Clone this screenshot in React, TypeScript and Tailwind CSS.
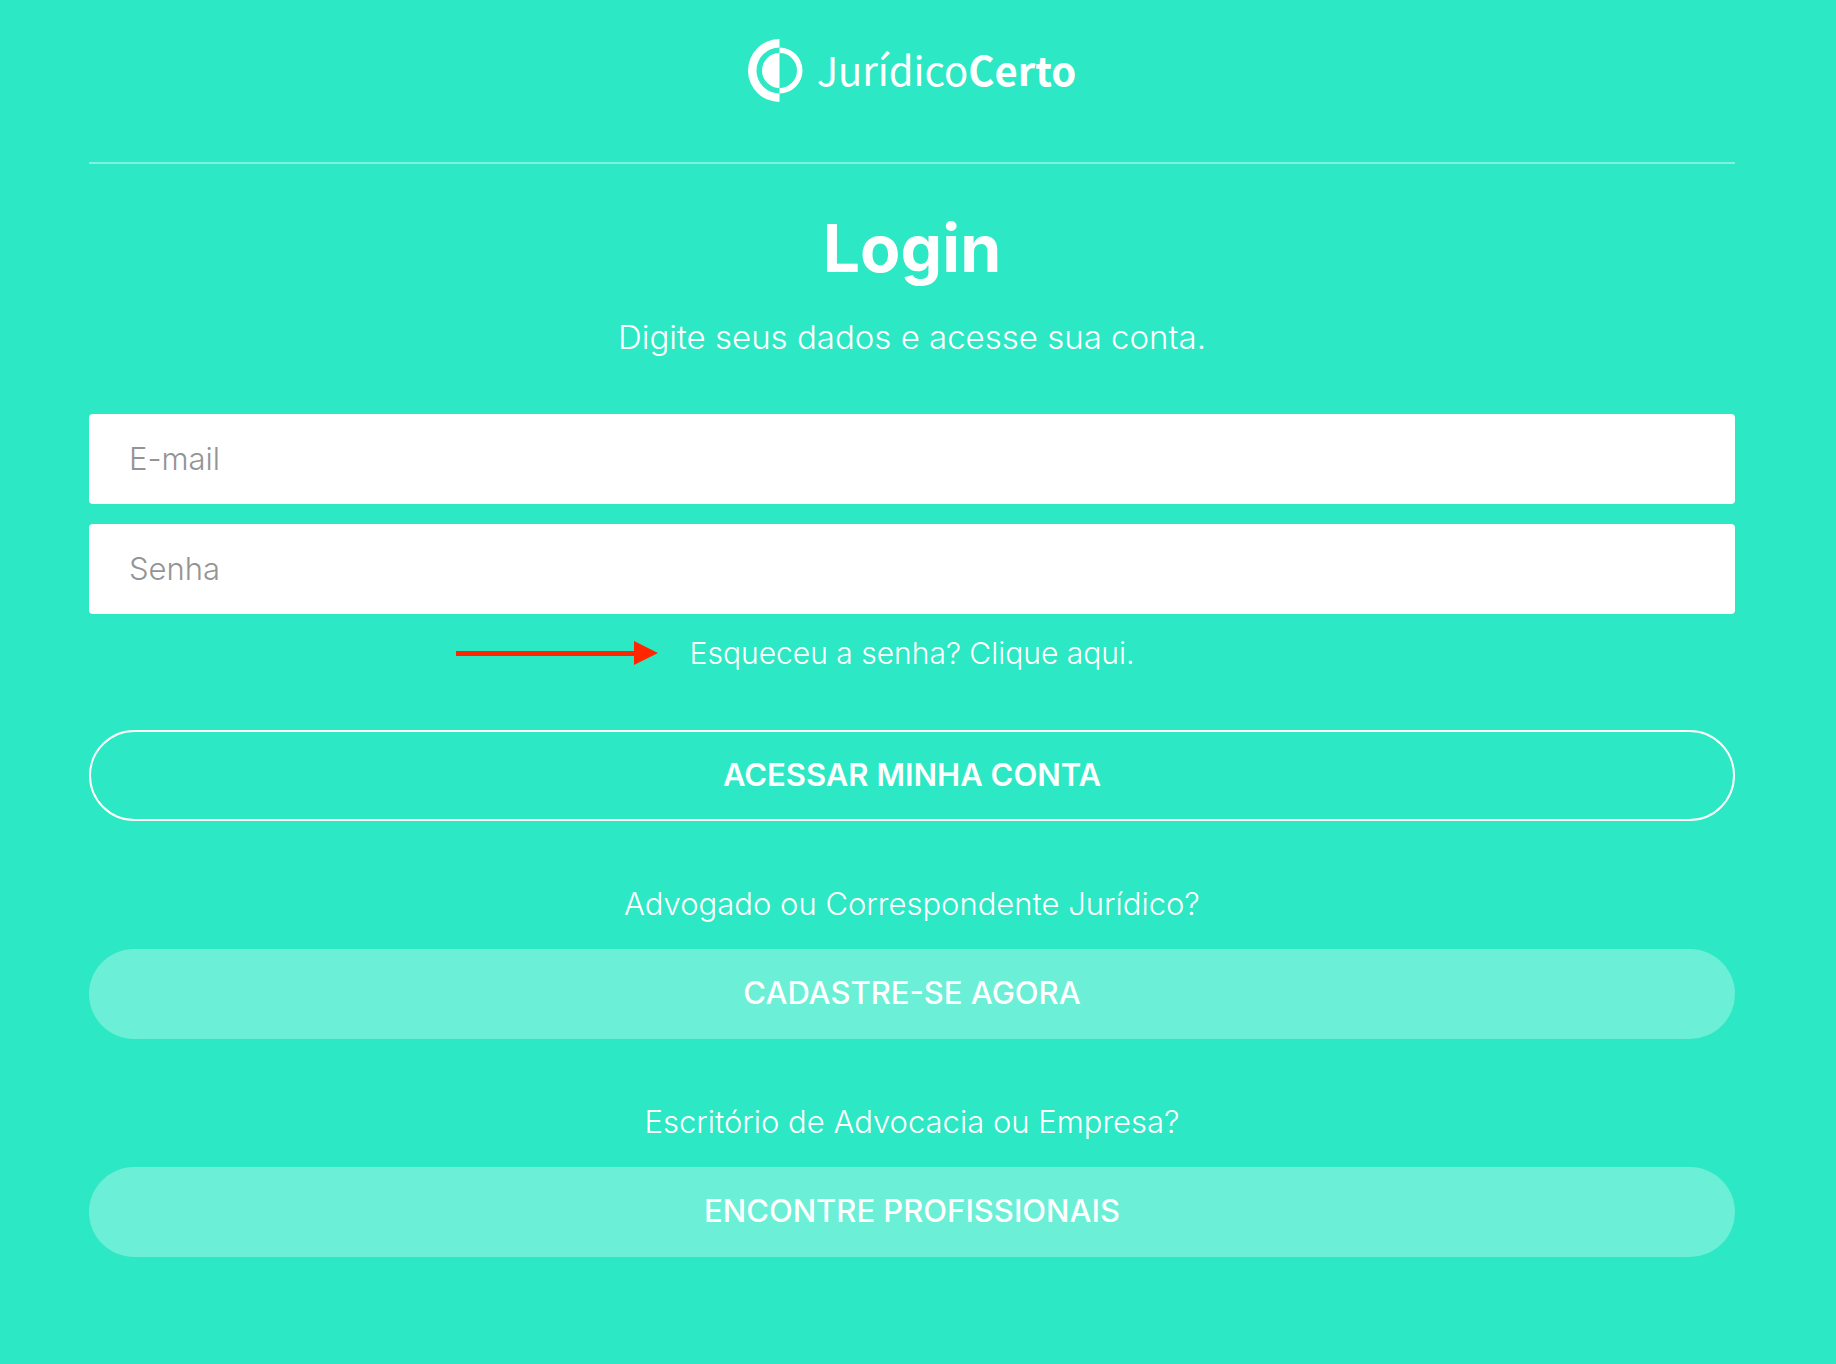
import { useState } from 'react';
import type { FormEvent } from 'react';

const SIGN_UP_OPTIONS = [
  { question: 'Advogado ou Correspondente Jurídico?', action: 'CADASTRE-SE AGORA' },
  { question: 'Escritório de Advocacia ou Empresa?', action: 'ENCONTRE PROFISSIONAIS' },
];

function Logo() {
  return (
    <a href="#" className="flex items-start gap-3.5">
      <svg width="55" height="64" viewBox="0 0 55 64" fill="#fff" aria-hidden="true">
        <path d="M31.5 0A31.5 31.5 0 0 0 31.5 63V54.5A23 23 0 0 1 31.5 8.5Z" />
        <path d="M31.5 14A17.5 17.5 0 0 0 31.5 49Z" />
        <path d="M31.5 8.5A23 23 0 0 1 31.5 54.5V49A17.5 17.5 0 0 0 31.5 14Z" />
      </svg>
      <span className="font-['Noto_Sans_CJK_JP',sans-serif] text-[40px] leading-[60px] font-normal">
        Jurídico<span className="font-bold">Certo</span>
      </span>
    </a>
  );
}

function Arrow() {
  return (
    <svg
      className="absolute right-full top-2 mr-8"
      width="202"
      height="24"
      viewBox="0 0 202 24"
      fill="#ff2600"
      aria-hidden="true"
    >
      <path d="M0 10H178V0L202 12L178 24V15H0Z" />
    </svg>
  );
}

type FieldProps = {
  type: string;
  label: string;
  value: string;
  onChange: (value: string) => void;
};

function Field({ type, label, value, onChange }: FieldProps) {
  return (
    <input
      type={type}
      aria-label={label}
      placeholder={label}
      value={value}
      onChange={e => onChange(e.target.value)}
      className="block w-full h-[90px] px-10 pb-0.5 rounded-[4px] bg-white text-[31px] text-[#555] placeholder:text-[#949494] outline-none"
    />
  );
}

export default function App() {
  const [email, setEmail] = useState('');
  const [password, setPassword] = useState('');

  const handleSubmit = (e: FormEvent) => {
    e.preventDefault();
  };

  return (
    <div className="min-h-screen bg-[#2ce8c4] pt-[39px] pb-24 pl-[89px] pr-[101px] font-[Inter,sans-serif] text-[30px] leading-10 font-light text-white">
      <header className="flex justify-center pb-[59px] border-b-2 border-white/40">
        <Logo />
      </header>

      <main>
        <h1 className="mt-11 text-center text-[66px] leading-[80px] font-bold">Login</h1>
        <p className="mt-[29px] text-center text-[33px]">Digite seus dados e acesse sua conta.</p>

        <form onSubmit={handleSubmit} className="mt-[57px]">
          <div className="flex flex-col gap-5">
            <Field type="email" label="E-mail" value={email} onChange={setEmail} />
            <Field type="password" label="Senha" value={password} onChange={setPassword} />
          </div>

          <div className="mt-[19px] flex justify-center">
            <div className="relative">
              <Arrow />
              <a href="#">Esqueceu a senha? Clique aqui.</a>
            </div>
          </div>

          <button
            type="submit"
            className="mt-[57px] block w-full h-[91px] pb-0.5 rounded-full border-2 border-white text-[31px] font-semibold"
          >
            ACESSAR MINHA CONTA
          </button>
        </form>

        {SIGN_UP_OPTIONS.map(option => (
          <section key={option.action} className="mt-[63px] text-[31px]">
            <p className="text-center">{option.question}</p>
            <button
              type="button"
              className="mt-[25px] block w-full h-[90px] pb-0.5 rounded-full bg-white/30 font-medium"
            >
              {option.action}
            </button>
          </section>
        ))}
      </main>
    </div>
  );
}
